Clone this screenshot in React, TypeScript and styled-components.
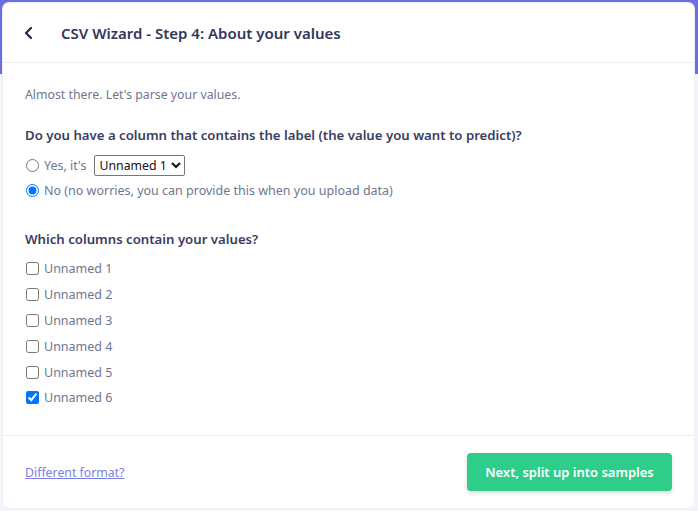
import React from "react";
import styled, { createGlobalStyle } from "styled-components";

const Global = createGlobalStyle`
  html, body { margin: 0; padding: 0; }
  body {
    font-family: "Noto Sans", "Open Sans", sans-serif;
    background: linear-gradient(#6b6de0 0px, #6b6de0 74px, #f4f5fa 74px);
    width: 698px;
    height: 511px;
    overflow: hidden;
  }
`;

const Page = styled.div`
  padding: 3px 4px 3px 3px;
  box-sizing: border-box;
  height: 511px;
`;

const Card = styled.div`
  background: #fff;
  border-radius: 6px;
  height: 505px;
  display: flex;
  flex-direction: column;
  box-shadow: 0 0 0 1px #eef0f5;
`;

const Header = styled.div`
  height: 60px;
  display: flex;
  align-items: center;
  border-bottom: 1px solid #eceef3;
  box-sizing: border-box;
  padding-left: 20px;
  gap: 26px;
`;

const Title = styled.h1`
  margin: 0;
  font-size: 15px;
  font-weight: 600;
  color: #33375c;
`;

const Body = styled.div`
  flex: 1;
  padding: 23px 22px 0 22px;
  border-bottom: 1px solid #eceef3;
`;

const Intro = styled.p`
  margin: 0 0 23px 0;
  font-size: 12.3px;
  color: #6f7690;
`;

const Question = styled.h2<{ mb: number }>`
  margin: 0 0 ${(p) => p.mb}px 0;
  font-size: 13.2px;
  font-weight: 600;
  color: #3a3d63;
`;

const OptionRow = styled.label<{ h: number }>`
  display: flex;
  align-items: center;
  height: ${(p) => p.h}px;
  font-size: 12.5px;
  color: #6f7690;
  gap: 5px;
  input { margin: 0 0 0 1px; }
`;

const Select = styled.select`
  font-family: "Noto Sans", sans-serif;
  font-size: 12.3px;
  color: #111;
  height: 21px;
  margin-left: 2px;
  border: 1px solid #767676;
  border-radius: 2px;
  background: #fff;
  padding: 0 0 0 1px;
`;

const Section = styled.div<{ mb: number }>`
  margin-bottom: ${(p) => p.mb}px;
`;

const Footer = styled.div`
  height: 72px;
  display: flex;
  align-items: center;
  justify-content: space-between;
  padding: 0 22px;
`;

const Link = styled.a`
  font-size: 12.3px;
  color: #7c7fe6;
  text-decoration: underline;
  font-family: "Noto Sans", sans-serif;
`;

const Button = styled.button`
  height: 38px;
  width: 205px;
  border: none;
  border-radius: 4px;
  background: #2ecd8a;
  color: #fff;
  font-family: "Noto Sans", sans-serif;
  font-weight: 600;
  font-size: 13px;
  box-shadow: 0 2px 4px rgba(0, 0, 0, 0.15);
`;

const BackIcon = () => (
  <svg width="12" height="14" viewBox="0 0 12 14">
    <path d="M8 2 L3 7 L8 12" fill="none" stroke="#23284a" strokeWidth="2.2" strokeLinecap="round" strokeLinejoin="round" />
  </svg>
);

const cols = ["Unnamed 1", "Unnamed 2", "Unnamed 3", "Unnamed 4", "Unnamed 5", "Unnamed 6"];

export default function App() {
  return (
    <>
      <Global />
      <Page>
        <Card>
          <Header>
            <BackIcon />
            <Title>CSV Wizard - Step 4: About your values</Title>
          </Header>
          <Body>
            <Intro>Almost there. Let's parse your values.</Intro>
            <Section mb={28}>
              <Question mb={8}>Do you have a column that contains the label (the value you want to predict)?</Question>
              <OptionRow h={26}>
                <input type="radio" name="label" />
                Yes, it's
                <Select defaultValue="Unnamed 1">
                  {cols.map((c) => (
                    <option key={c}>{c}</option>
                  ))}
                </Select>
              </OptionRow>
              <OptionRow h={24}>
                <input type="radio" name="label" defaultChecked />
                No (no worries, you can provide this when you upload data)
              </OptionRow>
            </Section>
            <Section mb={0}>
              <Question mb={8}>Which columns contain your values?</Question>
              {cols.map((c, i) => (
                <OptionRow key={c} h={25.8}>
                  <input type="checkbox" defaultChecked={i === 5} />
                  {c}
                </OptionRow>
              ))}
            </Section>
          </Body>
          <Footer>
            <Link href="#">Different format?</Link>
            <Button>Next, split up into samples</Button>
          </Footer>
        </Card>
      </Page>
    </>
  );
}
